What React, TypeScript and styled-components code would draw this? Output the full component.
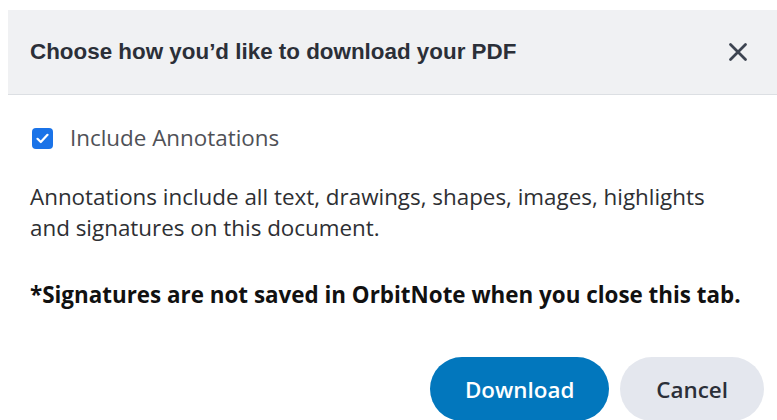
import React, { useState } from "react";
import styled, { createGlobalStyle } from "styled-components";

const GlobalStyle = createGlobalStyle`
  body {
    margin: 0;
    background: #ffffff;
    font-family: "Open Sans", "Liberation Sans", sans-serif;
  }
`;

const Dialog = styled.div`
  width: 769px;
  height: 410px;
  margin: 10px 0 0 8px;
  background: #ffffff;
  overflow: hidden;
`;

const Header = styled.div`
  display: flex;
  align-items: center;
  justify-content: space-between;
  height: 85px;
  padding: 0 26px 0 22px;
  background: #f0f1f3;
  border-bottom: 1px solid #dcdfe3;
  box-sizing: border-box;
`;

const Title = styled.h2`
  margin: 0;
  font-family: "Liberation Sans", Arial, sans-serif;
  font-size: 22.4px;
  font-weight: 700;
  color: #2b2f38;
`;

const CloseButton = styled.button`
  display: flex;
  align-items: center;
  justify-content: center;
  width: 26px;
  height: 26px;
  padding: 0;
  border: none;
  background: transparent;
  cursor: pointer;
`;

const Body = styled.div`
  padding: 0 13px 0 22px;
`;

const CheckRow = styled.label`
  display: flex;
  align-items: center;
  gap: 17px;
  margin-top: 28px;
  padding-left: 2px;
  font-size: 22.4px;
  line-height: 30px;
  color: #4f5157;
  cursor: pointer;
`;

const Box = styled.span<{ $checked: boolean }>`
  display: flex;
  align-items: center;
  justify-content: center;
  width: 21px;
  height: 21px;
  border-radius: 4px;
  background: ${(p) => (p.$checked ? "#1a73e8" : "#ffffff")};
  border: ${(p) => (p.$checked ? "none" : "2px solid #8a8f98")};
  box-sizing: border-box;
`;

const Text = styled.p<{ $bold?: boolean }>`
  margin: 0;
  font-size: 22.4px;
  line-height: 31px;
  color: ${(p) => (p.$bold ? "#111111" : "#2e2f33")};
  font-weight: ${(p) => (p.$bold ? 700 : 400)};
`;

const Description = styled(Text)`
  margin-top: 28px;
`;

const Warning = styled(Text)`
  margin-top: 36px;
`;

const Actions = styled.div`
  display: flex;
  justify-content: flex-end;
  gap: 11px;
  margin-top: 47px;
`;

const Button = styled.button<{ $primary?: boolean }>`
  height: 64px;
  padding: 0 ${(p) => (p.$primary ? 35 : 36)}px;
  border: none;
  border-radius: 32px;
  font-family: "Open Sans", sans-serif;
  font-size: 22.4px;
  font-weight: 600;
  background: ${(p) => (p.$primary ? "#0277bd" : "#e4e7ee")};
  color: ${(p) => (p.$primary ? "#ffffff" : "#2b2f38")};
  cursor: pointer;
`;

export default function App() {
  const [checked, setChecked] = useState(true);

  return (
    <>
      <GlobalStyle />
      <Dialog>
        <Header>
          <Title>Choose how you’d like to download your PDF</Title>
          <CloseButton aria-label="Close">
            <svg width="20" height="20" viewBox="0 0 20 20">
              <path
                d="M2.5 2.5 L17.5 17.5 M17.5 2.5 L2.5 17.5"
                stroke="#3d4451"
                strokeWidth="2.8"
                strokeLinecap="round"
              />
            </svg>
          </CloseButton>
        </Header>
        <Body>
          <CheckRow onClick={() => setChecked(!checked)}>
            <Box $checked={checked}>
              {checked && (
                <svg width="13" height="11" viewBox="0 0 13 11">
                  <path
                    d="M1.5 5.8 L4.8 9 L11.5 1.8"
                    fill="none"
                    stroke="#ffffff"
                    strokeWidth="2.2"
                    strokeLinecap="round"
                    strokeLinejoin="round"
                  />
                </svg>
              )}
            </Box>
            Include Annotations
          </CheckRow>
          <Description>
            Annotations include all text, drawings, shapes, images, highlights
            <br />
            and signatures on this document.
          </Description>
          <Warning $bold>
            *Signatures are not saved in OrbitNote when you close this tab.
          </Warning>
          <Actions>
            <Button $primary>Download</Button>
            <Button>Cancel</Button>
          </Actions>
        </Body>
      </Dialog>
    </>
  );
}
